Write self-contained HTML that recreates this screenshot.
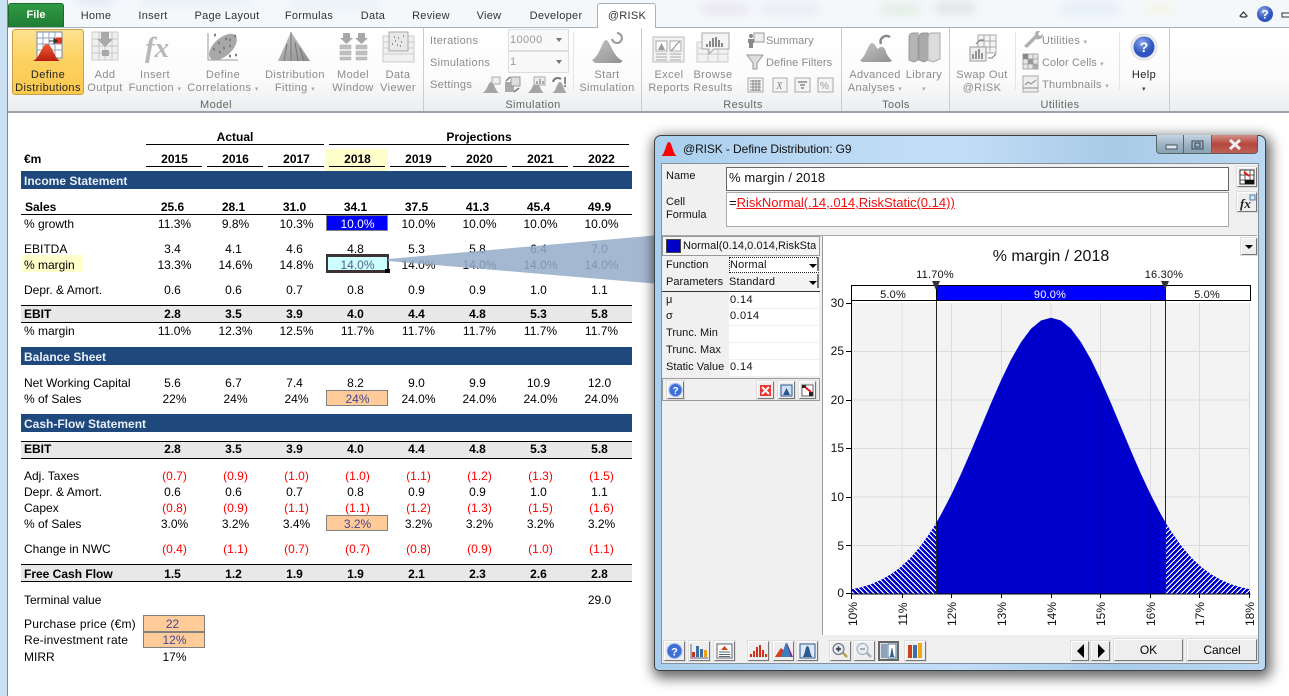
<!DOCTYPE html>
<html><head><meta charset="utf-8">
<style>
html,body{margin:0;padding:0;width:1289px;height:696px;overflow:hidden;background:#fff;font-family:"Liberation Sans",sans-serif;color:#000}
.a{position:absolute}
#top{left:0;top:0;width:1289px;height:27px;background:#f4f8fb;overflow:hidden}
.blob{position:absolute;filter:blur(5px);border-radius:6px;opacity:.4}
#frame{left:0;top:0;width:7px;height:696px;background:#c9dff2;border-right:1px solid #7f8a94}
#rib{left:8px;top:27px;width:1281px;height:83px;background:linear-gradient(#fff 0%,#fbfbfb 60%,#eceef0 100%);border-top:1px solid #a9b0b6;border-bottom:2px solid #9aa3ab}
.sep{position:absolute;top:28px;height:83px;width:1px;background:#c8cdd1}
.sep2{position:absolute;top:32px;height:58px;width:1px;background:#e2e4e6}
.tab{position:absolute;top:10px;font-size:11px;letter-spacing:.3px;line-height:13px;color:#333;transform:translateX(-50%);white-space:nowrap}
.t{position:absolute;font-size:11px;letter-spacing:.4px;line-height:13px;color:#8c8c8c;transform:translateX(-50%);white-space:nowrap;text-align:center}
.g{position:absolute;font-size:11px;letter-spacing:.4px;line-height:13px;color:#666;transform:translateX(-50%);white-space:nowrap}
.s{position:absolute;font-size:11px;letter-spacing:.3px;line-height:13px;color:#8c8c8c;white-space:nowrap}
.combo{position:absolute;left:508px;width:59px;height:20px;border:1px solid #dcdfe2;background:#f9f9f9;font-size:11px;letter-spacing:.4px;line-height:21px;color:#999;text-indent:1px}
.combo:after{content:"";position:absolute;right:6px;top:8px;border:3px solid transparent;border-top:4px solid #777}
.r{position:absolute;left:0;display:flex;height:16px;line-height:16px;font-size:12px;white-space:nowrap}
.r span{width:144px;box-sizing:border-box;padding-left:24px}
.r i{width:61px;text-align:center;font-style:normal}
.n i{padding-right:4px;box-sizing:border-box}
.b{font-weight:bold}
.red i{color:#f00}
.bar{position:absolute;left:21px;width:611px;height:18px;background:#1f497d;color:#e8eef5;font-weight:bold;font-size:12px;line-height:20px;text-indent:3px}
.band{position:absolute;left:21px;width:611px;height:16px;background:#e8e8e8;border-top:1px solid #000;border-bottom:1px solid #000}
.ln{position:absolute;height:1px;background:#000}
.org{position:absolute;background:#ffcc99;border:1px solid #808080;box-sizing:border-box;text-align:center;font-size:12px;color:#454592;line-height:15px}
#dlg{left:654px;top:135px;width:610px;height:534px;border:1px solid #3c4146;border-radius:7px 7px 5px 5px;background:linear-gradient(90deg,#a9cfee,#bcdaf5 30%,#c3ddf6 50%,#a8cbe8 75%,#bcd9f2);box-shadow:2px 4px 13px 3px rgba(0,0,0,.6)}
#in{left:661px;top:163px;width:596px;height:499px;border:1px solid #84919c;background:#f0f0f0}
.d{position:absolute;font-size:11px;letter-spacing:.03px;line-height:14px;color:#111;white-space:nowrap}
.btn{position:absolute;box-sizing:border-box;background:#eee;border:1px solid;border-color:#fff #777 #777 #fff;box-shadow:0 0 0 1px #ddd}
.row{position:absolute;left:729px;width:90px;height:16px;background:#fff}
</style></head><body>

<div id="top" class="a">
<div class="blob" style="left:75px;top:-4px;width:40px;height:8px;background:#b5cee8"></div>
<div class="blob" style="left:140px;top:-3px;width:110px;height:7px;background:#cadbe8"></div>
<div class="blob" style="left:290px;top:0;width:90px;height:7px;background:#c9dde8"></div>
<div class="blob" style="left:700px;top:4px;width:50px;height:10px;background:#d5c6de"></div>
<div class="blob" style="left:760px;top:4px;width:60px;height:10px;background:#d7d7e6"></div>
<div class="blob" style="left:880px;top:4px;width:40px;height:10px;background:#bedcb8"></div>
<div class="blob" style="left:935px;top:3px;width:40px;height:10px;background:#b9bcc2"></div>
<div class="blob" style="left:1060px;top:4px;width:60px;height:10px;background:#c4d8f0"></div>
<div class="blob" style="left:1145px;top:4px;width:30px;height:9px;background:#f2efc2"></div>
</div>
<div id="frame" class="a"></div>
<div id="rib" class="a"></div>

<div class="a" style="left:8px;top:3px;width:56px;height:24px;background:linear-gradient(#2f9a45,#1f7d33);border:1px solid #1d6a2d;border-bottom:none;border-radius:3px 3px 0 0;box-sizing:border-box;color:#fff;font-size:11px;font-weight:bold;text-align:center;line-height:23px">File</div>
<div class="tab" style="left:96px">Home</div>
<div class="tab" style="left:153px">Insert</div>
<div class="tab" style="left:227px">Page Layout</div>
<div class="tab" style="left:309px">Formulas</div>
<div class="tab" style="left:373px">Data</div>
<div class="tab" style="left:431px">Review</div>
<div class="tab" style="left:489px">View</div>
<div class="tab" style="left:556px">Developer</div>
<div class="a" style="left:597px;top:3px;width:59px;height:25px;box-sizing:border-box;background:#fff;border:1px solid #aab1b7;border-bottom:none;border-radius:3px 3px 0 0"></div>
<div class="tab" style="left:627px">@RISK</div>

<div class="a" style="left:12px;top:29px;width:72px;height:66px;box-sizing:border-box;background:linear-gradient(#fde28f,#fcd263 45%,#fbc94e);border:1px solid #c8a04d;border-radius:3px"></div>
<div class="t" style="left:48px;top:69px;color:#222">Define<br>Distributions</div>
<div class="t" style="left:105px;top:69px">Add<br>Output</div>
<div class="t" style="left:155px;top:69px">Insert<br>Function <small style="font-size:7px;color:#aaa">▾</small></div>
<div class="t" style="left:223px;top:69px">Define<br>Correlations <small style="font-size:7px;color:#aaa">▾</small></div>
<div class="t" style="left:295px;top:69px">Distribution<br>Fitting <small style="font-size:7px;color:#aaa">▾</small></div>
<div class="t" style="left:353px;top:69px">Model<br>Window</div>
<div class="t" style="left:398px;top:69px">Data<br>Viewer</div>
<div class="g" style="left:216px;top:99px">Model</div>
<div class="sep" style="left:423px"></div>
<div class="s" style="left:430px;top:35px">Iterations</div>
<div class="s" style="left:430px;top:57px">Simulations</div>
<div class="s" style="left:430px;top:79px">Settings</div>
<div class="combo" style="top:29px">10000</div>
<div class="combo" style="top:51px">1</div>
<div class="sep2" style="left:573px"></div>
<div class="t" style="left:607px;top:69px">Start<br>Simulation</div>
<div class="g" style="left:533px;top:99px">Simulation</div>
<div class="sep" style="left:641px"></div>
<div class="t" style="left:669px;top:69px">Excel<br>Reports</div>
<div class="t" style="left:713px;top:69px">Browse<br>Results</div>
<div class="s" style="left:766px;top:35px;letter-spacing:.1px">Summary</div>
<div class="s" style="left:766px;top:57px;letter-spacing:.1px">Define Filters</div>
<div class="g" style="left:743px;top:99px">Results</div>
<div class="sep" style="left:841px"></div>
<div class="t" style="left:875px;top:69px;letter-spacing:.3px">Advanced<br>Analyses <small style="font-size:7px;color:#aaa">▾</small></div>
<div class="t" style="left:924px;top:69px">Library<br><small style="font-size:7px;color:#aaa">▾</small></div>
<div class="g" style="left:896px;top:99px">Tools</div>
<div class="sep" style="left:949px"></div>
<div class="t" style="left:982px;top:69px">Swap Out<br>@RISK</div>
<div class="sep2" style="left:1015px"></div>
<div class="s" style="left:1042px;top:35px">Utilities <small style="font-size:7px;color:#aaa">▾</small></div>
<div class="s" style="left:1042px;top:57px;letter-spacing:.1px">Color Cells <small style="font-size:7px;color:#aaa">▾</small></div>
<div class="s" style="left:1042px;top:79px">Thumbnails <small style="font-size:7px;color:#aaa">▾</small></div>
<div class="sep2" style="left:1119px"></div>
<div class="t" style="left:1144px;top:69px;color:#222">Help<br><small style="font-size:7px;color:#444">▾</small></div>
<div class="g" style="left:1060px;top:99px">Utilities</div>
<div class="sep" style="left:1169px"></div>

<!-- SHEET -->
<div class="a" style="left:326px;top:149px;width:62px;height:22px;background:#ffffcc"></div>
<div class="a" style="left:21px;top:255px;width:62px;height:17px;background:#ffffcc"></div>
<div class="ln" style="left:146px;top:144px;width:178px"></div>
<div class="ln" style="left:329px;top:144px;width:300px"></div>
<div class="ln" style="left:146px;top:166px;width:56px"></div>
<div class="ln" style="left:207px;top:166px;width:56px"></div>
<div class="ln" style="left:268px;top:166px;width:56px"></div>
<div class="ln" style="left:329px;top:166px;width:56px"></div>
<div class="ln" style="left:390px;top:166px;width:56px"></div>
<div class="ln" style="left:451px;top:166px;width:56px"></div>
<div class="ln" style="left:512px;top:166px;width:56px"></div>
<div class="ln" style="left:573px;top:166px;width:56px"></div>
<div class="ln" style="left:21px;top:214px;width:611px"></div>
<div class="bar" style="top:171px">Income Statement</div>
<div class="bar" style="top:347px">Balance Sheet</div>
<div class="bar" style="top:414px">Cash-Flow Statement</div>
<div class="band" style="top:305px"></div>
<div class="band" style="top:441px"></div>
<div class="band" style="top:564px"></div>
<div class="a" style="left:326px;top:215px;width:62px;height:16px;box-sizing:border-box;background:#0000ff;border:1px solid #808080"></div>
<div class="a" style="left:326px;top:254px;width:63px;height:19px;box-sizing:border-box;background:#ccffff;border:solid #3e3232;border-width:3px 2px"></div>
<div class="a" style="left:385px;top:269px;width:5px;height:4px;background:#000"></div>
<div class="org" style="left:326px;top:390px;width:62px;height:16px"></div>
<div class="org" style="left:326px;top:515px;width:62px;height:16px"></div>
<div class="org" style="left:143px;top:615px;width:62px;height:17px"></div>
<div class="org" style="left:143px;top:632px;width:62px;height:16px"></div>

<div class="a b" style="left:235px;top:129px;font-size:12px;line-height:16px;transform:translateX(-50%)">Actual</div>
<div class="a b" style="left:479px;top:129px;font-size:12px;line-height:16px;transform:translateX(-50%)">Projections</div>
<div class="r b" style="top:151px"><span>€m</span><i>2015</i><i>2016</i><i>2017</i><i>2018</i><i>2019</i><i>2020</i><i>2021</i><i>2022</i></div>
<div class="r b n" style="top:199px"><span style="padding-left:25px">Sales</span><i>25.6</i><i>28.1</i><i>31.0</i><i>34.1</i><i>37.5</i><i>41.3</i><i>45.4</i><i>49.9</i></div>
<div class="r" style="top:216px"><span>% growth</span><i>11.3%</i><i>9.8%</i><i>10.3%</i><i style="color:#fff">10.0%</i><i>10.0%</i><i>10.0%</i><i>10.0%</i><i>10.0%</i></div>
<div class="r n" style="top:241px"><span>EBITDA</span><i>3.4</i><i>4.1</i><i>4.6</i><i>4.8</i><i>5.3</i><i>5.8</i><i>6.4</i><i>7.0</i></div>
<div class="r" style="top:257px"><span>% margin</span><i>13.3%</i><i>14.6%</i><i>14.8%</i><i style="color:#55608a">14.0%</i><i>14.0%</i><i>14.0%</i><i>14.0%</i><i>14.0%</i></div>
<div class="r n" style="top:282px"><span>Depr. &amp; Amort.</span><i>0.6</i><i>0.6</i><i>0.7</i><i>0.8</i><i>0.9</i><i>0.9</i><i>1.0</i><i>1.1</i></div>
<div class="r b n" style="top:306px"><span>EBIT</span><i>2.8</i><i>3.5</i><i>3.9</i><i>4.0</i><i>4.4</i><i>4.8</i><i>5.3</i><i>5.8</i></div>
<div class="r" style="top:323px"><span>% margin</span><i>11.0%</i><i>12.3%</i><i>12.5%</i><i>11.7%</i><i>11.7%</i><i>11.7%</i><i>11.7%</i><i>11.7%</i></div>
<div class="r n" style="top:375px"><span>Net Working Capital</span><i>5.6</i><i>6.7</i><i>7.4</i><i>8.2</i><i>9.0</i><i>9.9</i><i>10.9</i><i>12.0</i></div>
<div class="r" style="top:391px"><span>% of Sales</span><i>22%</i><i>24%</i><i>24%</i><i style="color:#454592">24%</i><i>24.0%</i><i>24.0%</i><i>24.0%</i><i>24.0%</i></div>
<div class="r b n" style="top:441px"><span>EBIT</span><i>2.8</i><i>3.5</i><i>3.9</i><i>4.0</i><i>4.4</i><i>4.8</i><i>5.3</i><i>5.8</i></div>
<div class="r red" style="top:468px"><span>Adj. Taxes</span><i>(0.7)</i><i>(0.9)</i><i>(1.0)</i><i>(1.0)</i><i>(1.1)</i><i>(1.2)</i><i>(1.3)</i><i>(1.5)</i></div>
<div class="r n" style="top:484px"><span>Depr. &amp; Amort.</span><i>0.6</i><i>0.6</i><i>0.7</i><i>0.8</i><i>0.9</i><i>0.9</i><i>1.0</i><i>1.1</i></div>
<div class="r red" style="top:500px"><span>Capex</span><i>(0.8)</i><i>(0.9)</i><i>(1.1)</i><i>(1.1)</i><i>(1.2)</i><i>(1.3)</i><i>(1.5)</i><i>(1.6)</i></div>
<div class="r" style="top:516px"><span>% of Sales</span><i>3.0%</i><i>3.2%</i><i>3.4%</i><i style="color:#454592">3.2%</i><i>3.2%</i><i>3.2%</i><i>3.2%</i><i>3.2%</i></div>
<div class="r red" style="top:541px"><span>Change in NWC</span><i>(0.4)</i><i>(1.1)</i><i>(0.7)</i><i>(0.7)</i><i>(0.8)</i><i>(0.9)</i><i>(1.0)</i><i>(1.1)</i></div>
<div class="r b n" style="top:566px"><span>Free Cash Flow</span><i>1.5</i><i>1.2</i><i>1.9</i><i>1.9</i><i>2.1</i><i>2.3</i><i>2.6</i><i>2.8</i></div>
<div class="r n" style="top:592px"><span>Terminal value</span><i></i><i></i><i></i><i></i><i></i><i></i><i></i><i>29.0</i></div>
<div class="r" style="top:616px"><span style="letter-spacing:.2px">Purchase price (€m)</span><i style="color:#454592;padding-right:4px;box-sizing:border-box">22</i></div>
<div class="r" style="top:632px"><span style="letter-spacing:.15px">Re-investment rate</span><i style="color:#454592">12%</i></div>
<div class="r" style="top:649px"><span>MIRR</span><i>17%</i></div>

<svg class="a" style="left:0;top:0" width="1289" height="696"><polygon points="388,259 660,235 660,284 388,261" fill="rgb(150,172,202)" fill-opacity=".86"/></svg>

<!-- DIALOG -->
<div id="dlg" class="a"></div>
<div class="a" style="left:683px;top:142px;font-size:12px;letter-spacing:-.1px;line-height:15px;color:#111">@RISK - Define Distribution: G9</div>
<div class="a" style="left:1156px;top:135px;width:28px;height:19px;box-sizing:border-box;background:linear-gradient(#c6d6e4,#9fb4c6 50%,#8aa0b4);border:1px solid #566;border-top:none;border-radius:0 0 0 4px"></div>
<div class="a" style="left:1184px;top:135px;width:28px;height:19px;box-sizing:border-box;background:linear-gradient(#c6d6e4,#9fb4c6 50%,#8aa0b4);border:1px solid #566;border-top:none;border-left:none"></div>
<div class="a" style="left:1212px;top:135px;width:46px;height:19px;box-sizing:border-box;background:linear-gradient(#d09088,#b5483e 50%,#bd6258);border:1px solid #655;border-top:none;border-left:none;border-radius:0 0 4px 0"></div>
<div id="in" class="a"></div>

<div class="d" style="left:666px;top:169px">Name</div>
<div class="d" style="left:666px;top:196px;line-height:13px">Cell<br>Formula</div>
<div class="a" style="left:726px;top:167px;width:503px;height:24px;box-sizing:border-box;background:#fff;border:1px solid #666;font-size:13px;letter-spacing:.1px;line-height:20px;padding-left:2px;color:#111">% margin / 2018</div>
<div class="a" style="left:726px;top:192px;width:503px;height:35px;box-sizing:border-box;background:#fff;border:1px solid #aaa;font-size:13px;line-height:18px;padding:1px 0 0 2px;color:#111">=<span style="color:#f01010;text-decoration:underline">RiskNormal(.14,.014,RiskStatic(0.14))</span></div>
<div class="a" style="left:662px;top:235px;width:595px;height:1px;background:#a8a8a8"></div>
<div class="a" style="left:822px;top:236px;width:435px;height:399px;background:#fff;border-left:1px solid #999"></div>

<!-- left panel -->
<div class="a" style="left:662px;top:236px;width:158px;height:20px;box-sizing:border-box;border:1px solid #999;background:#f4f4f4"></div>
<div class="a" style="left:666px;top:239px;width:15px;height:14px;background:#0000c8;border:1px solid #444;box-sizing:border-box"></div>
<div class="a" style="left:683px;top:239px;width:133px;overflow:hidden;font-size:11px;letter-spacing:.05px;line-height:15px;white-space:nowrap;color:#111">Normal(0.14,0.014,RiskStatic(0.14))</div>
<div class="d" style="left:666px;top:258px">Function</div>
<div class="d" style="left:666px;top:275px">Parameters</div>
<div class="a" style="left:729px;top:257px;width:90px;height:16px;box-sizing:border-box;border:1px dotted #222;background:#fff;font-size:11px;line-height:14px;letter-spacing:.2px;color:#111">Normal</div>
<div class="a" style="left:729px;top:274px;width:90px;height:16px;background:#f4f4f4;font-size:11px;line-height:16px;letter-spacing:.2px;color:#111">Standard</div>
<div class="a" style="left:662px;top:291px;width:158px;height:1px;background:#333"></div>
<div class="row" style="top:292px"></div><div class="row" style="top:309px"></div><div class="row" style="top:326px"></div><div class="row" style="top:343px"></div><div class="row" style="top:360px"></div>
<div class="d" style="left:666px;top:293px">μ</div><div class="d" style="left:730px;top:293px;letter-spacing:.4px">0.14</div>
<div class="d" style="left:666px;top:309px">σ</div><div class="d" style="left:730px;top:309px;letter-spacing:.4px">0.014</div>
<div class="d" style="left:666px;top:326px">Trunc. Min</div>
<div class="d" style="left:666px;top:343px">Trunc. Max</div>
<div class="d" style="left:666px;top:360px">Static Value</div><div class="d" style="left:730px;top:360px;letter-spacing:.4px">0.14</div>
<div class="a" style="left:662px;top:378px;width:158px;height:23px;box-sizing:border-box;border:1px solid #999;background:#f0f0f0"></div>
<div class="btn" style="left:667px;top:381px;width:17px;height:18px"></div>
<div class="btn" style="left:757px;top:381px;width:17px;height:18px"></div>
<div class="btn" style="left:778px;top:381px;width:17px;height:18px"></div>
<div class="btn" style="left:799px;top:381px;width:17px;height:18px"></div>

<!-- side buttons -->
<div class="btn" style="left:1237px;top:167px;width:20px;height:20px"></div>
<div class="btn" style="left:1237px;top:192px;width:20px;height:20px"></div>
<div class="btn" style="left:1241px;top:238px;width:16px;height:17px"></div>

<!-- bottom buttons -->
<div class="btn" style="left:664px;top:641px;width:21px;height:20px"></div>
<div class="btn" style="left:689px;top:641px;width:21px;height:20px"></div>
<div class="btn" style="left:714px;top:641px;width:21px;height:20px"></div>
<div class="btn" style="left:748px;top:641px;width:21px;height:20px"></div>
<div class="btn" style="left:773px;top:641px;width:21px;height:20px"></div>
<div class="btn" style="left:797px;top:641px;width:21px;height:20px"></div>
<div class="btn" style="left:830px;top:641px;width:21px;height:20px"></div>
<div class="btn" style="left:854px;top:641px;width:21px;height:20px"></div>
<div class="a" style="left:878px;top:641px;width:21px;height:20px;box-sizing:border-box;background:#dfe3e6;border:2px solid #666"></div>
<div class="btn" style="left:905px;top:641px;width:21px;height:20px"></div>
<div class="btn" style="left:1071px;top:641px;width:18px;height:20px"></div>
<div class="btn" style="left:1091px;top:641px;width:19px;height:20px"></div>
<div class="btn" style="left:1114px;top:639px;width:69px;height:22px;font-size:12px;line-height:20px;text-align:center">OK</div>
<div class="btn" style="left:1187px;top:639px;width:70px;height:22px;font-size:12px;line-height:20px;text-align:center">Cancel</div>

<svg class="a" style="left:0;top:0;font-family:'Liberation Sans',sans-serif" width="1289" height="696">
<defs>
<pattern id="hl" patternUnits="userSpaceOnUse" width="5" height="5"><g shape-rendering="crispEdges"><rect width="5" height="5" fill="#0000cd"/><path d="M0 0h1v1H0ZM1 1h1v1H1ZM2 2h1v1H2ZM3 3h1v1H3ZM4 4h1v1H4Z" fill="#fff"/><path d="M1 0h1v1H1ZM2 1h1v1H2ZM3 2h1v1H3ZM4 3h1v1H4ZM0 4h1v1H0Z" fill="#8888e8"/></g></pattern>
<pattern id="hr" patternUnits="userSpaceOnUse" width="5" height="5"><g shape-rendering="crispEdges"><rect width="5" height="5" fill="#0000cd"/><path d="M4 0h1v1H4ZM3 1h1v1H3ZM2 2h1v1H2ZM1 3h1v1H1ZM0 4h1v1H0Z" fill="#fff"/><path d="M3 0h1v1H3ZM2 1h1v1H2ZM1 2h1v1H1ZM0 3h1v1H0ZM4 4h1v1H4Z" fill="#8888e8"/></g></pattern>
<linearGradient id="rd" x1="0" y1="0" x2="0" y2="1"><stop offset="0" stop-color="#f06030"/><stop offset="1" stop-color="#b81c10"/></linearGradient>
<linearGradient id="gr" x1="0" y1="0" x2="1" y2="1"><stop offset="0" stop-color="#c4c4c4"/><stop offset="1" stop-color="#8f8f8f"/></linearGradient>
<radialGradient id="hb" cx=".4" cy=".3"><stop offset="0" stop-color="#8ba8ea"/><stop offset="1" stop-color="#2f55c0"/></radialGradient>
</defs>

<!-- Define Distributions icon -->
<rect x="37" y="32" width="25" height="26" fill="#fff" stroke="#6f88b0"/>
<path d="M37 38h25M37 44h25M37 50h25M43 32v26M49 32v26M55 32v26" stroke="#8ea3c4" fill="none"/>
<rect x="56" y="37.500" width="6" height="6" fill="#e8301c"/>
<path d="M49 41h5v-2.500l3.500 2.500-3.500 2.500V41.500" fill="#333" stroke="#333"/>
<path d="M33 61C40 58 42 44 47 44S54 58 60 61Z" fill="url(#rd)"/>
<!-- Add Output -->
<rect x="92" y="32" width="26" height="28" fill="#f0f0f0" stroke="#ccc"/>
<path d="M92 39h26M92 46h26M92 53h26M99 32v28M105 32v28M112 32v28" stroke="#c6c6c6" fill="none"/>
<rect x="102" y="50" width="7" height="6" fill="#a8a8a8"/>
<path d="M101 32h8v7h4l-8 8-8-8h4Z" fill="#a9a9a9"/>
<!-- fx -->
<text x="145" y="57" font-family="'Liberation Serif',serif" font-style="italic" font-weight="bold" font-size="29" fill="#b8b8b8">fx</text>
<!-- correlations -->
<path d="M208 33v27h30" stroke="#999" fill="none"/>
<ellipse cx="223" cy="47" rx="17" ry="9" transform="rotate(-42 223 47)" fill="#a8a8a8"/>
<path d="M213 49h2M218 43h2M223 48h2M229 40h2M225 39h2M219 52h2M229 46h2M234 36h2M214 35h2M235 55h2M229 56h2" stroke="#7b7b7b" stroke-width="2.500" fill="none"/>
<!-- fitting -->
<path d="M291 32L278 61H310Z" fill="url(#gr)"/><path d="M291 32v29M287 44l-3 17M295 42l3 19M300 48l4 13" stroke="#777" fill="none"/>
<!-- Model window -->
<path d="M343 33h7v5h3l-6.500 6-6.500-6h3ZM358 33h7v5h3l-6.500 6-6.500-6h3Z" fill="#a8a8a8"/>
<path d="M340 45h11v4h-11ZM356 45h11v4h-11ZM340 51h11v4h-11ZM356 51h11v4h-11ZM340 57h11v3h-11ZM356 57h11v3h-11Z" fill="#c0c0c0" stroke="#aaa" stroke-width=".5"/>
<!-- Data viewer -->
<rect x="383" y="36" width="31" height="26" fill="#f0f0f0" stroke="#ccc"/><path d="M383 42h31M383 48h31M383 54h31" stroke="#ccc"/>
<rect x="389" y="32" width="19" height="19" fill="#e8e8e8" stroke="#aaa"/>
<path d="M392 44h1M395 41h1M398 38h1M401 42h1M394 37h1M403 36h1M397 45h1M400 46h1" stroke="#777" stroke-width="1.500"/>
<!-- Settings icons -->
<path d="M482 93c5-1 6-11 9-11s5 10 8 11Z" fill="#a5a5a5"/><rect x="492" y="77" width="8" height="7" fill="#eee" stroke="#aaa"/>
<rect x="505" y="82" width="9" height="10" fill="#aaa"/><rect x="511" y="77" width="9" height="9" fill="#ddd" stroke="#999"/><path d="M506 81l4-4M514 92l5-4" stroke="#777" stroke-width="1.500"/>
<path d="M527 93c5-1 6-11 9-11s5 10 8 11Z" fill="#a5a5a5"/><rect x="534" y="77" width="11" height="8" fill="#eee" stroke="#aaa"/><path d="M537 84v-3M540 84v-5M543 84v-3" stroke="#666"/>
<path d="M552 93c4-1 5-11 8-11s4 10 7 11Z" fill="#a5a5a5"/><path d="M553 82c1-4 5-5 8-3" stroke="#777" stroke-width="2" fill="none"/><path d="M565 77v7M565 85v2" stroke="#666" stroke-width="1.500"/>
<!-- Start simulation -->
<path d="M592 60C600 56 602 40 606 40C610 40 612 56 623 61L620 63H595Z" fill="url(#gr)"/>
<path d="M612 39a5 5 0 1 0 5-6" stroke="#999" stroke-width="2" fill="none"/>
<!-- Excel Reports -->
<rect x="653" y="37" width="31" height="25" fill="#f2f2f2" stroke="#bbb"/><rect x="656" y="41" width="11" height="10" fill="#fff" stroke="#aaa"/><rect x="670" y="41" width="11" height="10" fill="#fff" stroke="#aaa"/>
<path d="M658 50l3.500-7 3.500 7Z" fill="#999"/><path d="M671 50c4 0 4-7 9-8" stroke="#888" fill="none"/><path d="M656 54h11M670 54h11M656 57h11M670 57h11M656 60h11M670 60h11" stroke="#aaa"/>
<!-- Browse Results -->
<rect x="697" y="42" width="31" height="20" fill="#f2f2f2" stroke="#ccc"/><path d="M697 48h31M697 54h31M708 42v20M718 42v20" stroke="#ccc"/>
<path d="M702 33h27v16h-15l-5 5v-5h-7Z" fill="#f4f4f4" stroke="#aaa"/>
<path d="M707 47v-3M710 47v-6M713 47v-9M716 47v-10M719 47v-7M722 47v-4" stroke="#888" stroke-width="2"/>
<!-- Summary, filters, etc -->
<rect x="754" y="33" width="10" height="9" fill="#eee" stroke="#999"/><circle cx="751" cy="36" r="2" fill="#888"/><path d="M748 39h6v4h-1v5h-4v-5h-1Z" fill="#888"/>
<path d="M747 55h16l-6 8v6h-4v-6Z" fill="#ddd" stroke="#999"/>
<g fill="#f4f4f4" stroke="#aaa"><rect x="748" y="78" width="15" height="14"/><rect x="773" y="78" width="14" height="14"/><rect x="795" y="78" width="15" height="14"/><rect x="818" y="78" width="15" height="14"/></g>
<path d="M750 81h11M750 84h11M750 87h11M750 90h11M753 80v11M756 80v11M759 80v11" stroke="#888"/>
<text x="776" y="89" font-family="'Liberation Serif',serif" font-style="italic" font-size="11" fill="#888">X</text>
<path d="M798 82h9M800 85h5M801 88h3" stroke="#888" stroke-width="1.500"/>
<text x="820" y="89" font-size="10" fill="#999">%</text>
<!-- Advanced analyses -->
<path d="M860 60C866 57 868 43 872 43C875 43 876 48 878 49C881 45 885 47 886 52C887 56 890 58 892 61L889 62H862Z" fill="url(#gr)"/><path d="M881 44c-2-6 4-10 9-7" stroke="#888" stroke-width="2.500" fill="none"/>
<!-- Library -->
<path d="M909 38q0-5 4-5h5v27l-4 2-5-2Z" fill="#b5b5b5" stroke="#999"/><path d="M919 38q0-5 4-5h5v27l-4 2-5-2Z" fill="#aaa" stroke="#999"/><path d="M928 38q0-5 4-5h8v26l-7 3-5-2Z" fill="#dcdcdc" stroke="#aaa"/>
<!-- Swap out -->
<rect x="978" y="35" width="18" height="18" fill="#f4f4f4" stroke="#aaa"/><path d="M978 41h18M978 47h18M984 35v18M990 35v18" stroke="#aaa"/>
<rect x="970" y="47" width="16" height="14" fill="#eee" stroke="#999"/><path d="M973 59v-5M976 59v-8M979 59v-10M982 59v-6" stroke="#777" stroke-width="1.500"/>
<path d="M976 44l4-4h4M996 54l-4 4h-4" stroke="#777" fill="none"/>
<!-- Utilities -->
<path d="M1024 46l11-11a4 4 0 0 1 2-4l3 0-2 3 2 2 3-2a5 5 0 0 1-7 5l-9 9Z" fill="#b0b0b0"/>
<rect x="1023" y="54" width="15" height="15" fill="#e6e6e6" stroke="#aaa"/><path d="M1023 59h15M1023 64h15M1028 54v15M1033 54v15" stroke="#aaa"/><rect x="1023" y="54" width="5" height="5" fill="#888"/><rect x="1028" y="59" width="5" height="5" fill="#999"/><rect x="1033" y="64" width="5" height="5" fill="#aaa"/>
<rect x="1023" y="76" width="15" height="16" fill="#eee" stroke="#aaa"/><path d="M1025 85l3-3 3 2 5-4M1023 88h15" stroke="#888" fill="none"/>
<!-- Help -->
<circle cx="1144" cy="47" r="13" fill="#ececec" stroke="#ddd"/><circle cx="1144" cy="47" r="10.500" fill="url(#hb)"/>
<text x="1144" y="52" font-size="14" font-weight="bold" fill="#fff" text-anchor="middle">?</text>
<!-- top right -->
<path d="M1240 16l3.500-4 3.500 4-1.500 1h-4Z" fill="none" stroke="#333" stroke-width="1.200"/>
<circle cx="1265" cy="14" r="8" fill="url(#hb)"/><text x="1265" y="18.500" font-size="12" font-weight="bold" fill="#fff" text-anchor="middle">?</text>
<rect x="1282" y="13" width="8" height="4" fill="none" stroke="#333"/>

<!-- dialog title icon -->
<path d="M661 156C665 155 666 142 669 142S673 155 677 156Z" fill="#f00"/>
<rect x="1166" y="145" width="11" height="4" fill="#dde6ee" stroke="#4a5560"/>
<rect x="1192" y="141" width="11" height="8" fill="none" stroke="#39444e"/><rect x="1195" y="143" width="5" height="4" fill="none" stroke="#39444e"/>
<path d="M1230 140l10 9M1240 140l-10 9" stroke="#eee" stroke-width="3"/>

<!-- chart -->
<rect x="851" y="303" width="399" height="291" fill="#f3f3f3"/>
<path d="M902 303v291M951.500 303v291M1001.500 303v291M1051 303v291M1100.500 303v291M1150.500 303v291M1199.500 303v291M1249.500 303v291M851 351.500h399M851 400h399M851 448.500h399M851 497h399M851 545.500h399" stroke="#dcdcdc" fill="none"/>
<polygon points="851,594 852,589.300 861,587.300 871,584.200 881,579.900 891,574.200 901,566.700 911,557.200 921,545.500 931,531.200 936,523.200 936,594" fill="url(#hl)"/>
<polygon points="936,594 936,523.200 941,514.500 951,495.300 961,474 971,451 981,427.100 991,403.200 1001,380.400 1011,359.600 1021,342.200 1031,328.800 1041,320.500 1051,317.700 1061,320.500 1071,328.800 1081,342.200 1091,359.600 1101,380.400 1111,403.200 1121,427.100 1131,451 1141,474 1151,495.300 1161,514.500 1166,523.200 1166,594" fill="#0000cd"/>
<polygon points="1166,594 1166,523.200 1171,531.200 1181,545.500 1191,557.200 1201,566.700 1211,574.200 1221,579.900 1231,584.200 1241,587.300 1250,589.300 1250,594" fill="url(#hr)"/>
<path d="M1001.500 380v214M1051 318v276M1100.500 380v214M1150.500 495v99M951.500 495v99" stroke="#0000b8" fill="none"/>
<path d="M851.500 300v294h399" stroke="#000" fill="none"/>
<path d="M846 303.500h5M846 351.500h5M846 400.500h5M846 448.500h5M846 497.500h5M846 545.500h5M846 593.500h5M851.500 594v5M902.500 594v4M951.500 594v4M1001.500 594v4M1051.500 594v4M1100.500 594v4M1150.500 594v4M1199.500 594v4M1249.500 594v4" stroke="#000" fill="none"/>
<path d="M936.500 295v299M1165.500 295v299" stroke="#222" fill="none"/>
<rect x="851.500" y="285.500" width="399" height="15" fill="#fff" stroke="#000"/>
<rect x="936.500" y="285.500" width="229" height="15" fill="#0000ff" stroke="#000"/>
<path d="M932 281h8l-4 9ZM1161 281h8l-4 9Z" fill="#333"/>
<g font-size="11" text-anchor="middle" fill="#111" style="letter-spacing:.2px">
<text x="893" y="298">5.0%</text><text x="1050" y="298" fill="#fff">90.0%</text><text x="1207" y="298">5.0%</text>
<text x="935" y="278">11.70%</text><text x="1164" y="278">16.30%</text>
</g>
<text x="1051" y="261" font-size="16" text-anchor="middle" fill="#111">% margin / 2018</text>
<g font-size="12" text-anchor="end" fill="#111">
<text x="844" y="307">30</text><text x="844" y="355">25</text><text x="844" y="404">20</text><text x="844" y="452">15</text><text x="844" y="501">10</text><text x="844" y="550">5</text><text x="844" y="597">0</text>
</g>
<g font-size="12" text-anchor="middle" fill="#111">
<text transform="translate(857,614) rotate(-90)">10%</text>
<text transform="translate(907,614) rotate(-90)">11%</text>
<text transform="translate(956,614) rotate(-90)">12%</text>
<text transform="translate(1006,614) rotate(-90)">13%</text>
<text transform="translate(1056,614) rotate(-90)">14%</text>
<text transform="translate(1105,614) rotate(-90)">15%</text>
<text transform="translate(1155,614) rotate(-90)">16%</text>
<text transform="translate(1204,614) rotate(-90)">17%</text>
<text transform="translate(1254,614) rotate(-90)">18%</text>
</g>

<!-- dropdown arrows -->
<path d="M809 264h8l-4 4ZM809 281h8l-4 4ZM1245 245h8l-4 4Z" fill="#000"/>
<rect x="817" y="257" width="2" height="14" fill="#777"/><rect x="817" y="274" width="2" height="14" fill="#777"/>
<!-- panel buttons -->
<circle cx="675.500" cy="390" r="6.500" fill="#3d6fd6" stroke="#9cb8ee"/><text x="675.500" y="394" font-size="10" font-weight="bold" fill="#fff" text-anchor="middle">?</text>
<rect x="760" y="385" width="11" height="11" fill="#e33"/><path d="M762 387l7 7M769 387l-7 7" stroke="#fff" stroke-width="2"/>
<rect x="781" y="385" width="11" height="11" fill="#cfe0f4" stroke="#27588f"/><path d="M783 395l3.500-7 3.500 7Z" fill="#27588f"/>
<rect x="802" y="385" width="11" height="11" fill="#fff" stroke="#666"/><rect x="802" y="385" width="4" height="3" fill="#222"/><rect x="809" y="392" width="4" height="4" fill="#222"/><path d="M805 387l6 5" stroke="#e11" stroke-width="2"/>
<!-- side buttons icons -->
<rect x="1240" y="170" width="14" height="14" fill="#fff" stroke="#333"/><path d="M1240 175h14M1240 180h14M1245 170v14M1250 170v14" stroke="#555"/><rect x="1245" y="180" width="9" height="4" fill="#111"/><path d="M1244 172l5 4" stroke="#e11" stroke-width="2"/>
<text x="1240" y="208" font-family="'Liberation Serif',serif" font-style="italic" font-weight="bold" font-size="13" fill="#222">fx</text>
<rect x="1250" y="195" width="5" height="5" fill="#d8e6f6" stroke="#4a78b0"/>
<!-- bottom toolbar icons -->
<circle cx="674.500" cy="651" r="7.500" fill="#3d6fd6" stroke="#a5bfee"/><text x="674.500" y="655.500" font-size="11" font-weight="bold" fill="#fff" text-anchor="middle">?</text>
<path d="M692 657v-5h3v5ZM696 657v-11h3v11ZM700 657v-8h3v8ZM704 657v-5h3v5Z" fill="#3c6fa6"/><rect x="692" y="652" width="3" height="5" fill="#c8321c"/><rect x="704" y="650" width="3" height="7" fill="#f0a010"/><path d="M691 644v14h17" stroke="#667" fill="none"/>
<rect x="717" y="644" width="15" height="14" fill="#fff" stroke="#667"/><path d="M721 650l3.500-4 3.500 4Z" fill="#d8401c"/><path d="M719 652h11M719 654.500h11M719 656.500h11" stroke="#567"/>
<path d="M751 657v-3M754 657v-6M757 657v-10M760 657v-12M763 657v-7M766 657v-3" stroke="#d0301c" stroke-width="2"/>
<path d="M775 657l6-9 3 3 3-8 6 14Z" fill="#8a1a88"/><path d="M775 657l6-9 4 9Z" fill="#d8401c"/><path d="M781 657l5-15 5 15Z" fill="#3c80c0"/>
<rect x="800" y="644" width="15" height="14" fill="#dce8f4" stroke="#35588a"/><path d="M802 657c3 0 3-11 5.500-11S810 657 813 657Z" fill="#285a90"/>
<circle cx="838.500" cy="649" r="5.500" fill="#dbe6f2" stroke="#667"/><path d="M836 649h5M838.500 646.500v5" stroke="#333" stroke-width="1.500"/><path d="M843 653l4 4" stroke="#b8a050" stroke-width="2.500"/>
<circle cx="862.500" cy="649" r="5.500" fill="#e8eef5" stroke="#9aaabb"/><path d="M860 649h5" stroke="#8898aa" stroke-width="1.500"/><path d="M867 653l4 4" stroke="#aab" stroke-width="2.500"/>
<rect x="881" y="644" width="6" height="14" fill="#8ea3bb"/><rect x="888" y="644" width="8" height="14" fill="#fff" stroke="#5a7a9a"/><path d="M889 657c2 0 2-9 3-9s1 9 3 9Z" fill="#2f5f90"/>
<rect x="908" y="645" width="4" height="13" fill="#c8401c"/><rect x="913" y="645" width="4" height="13" fill="#3a6ea8"/><rect x="918" y="643" width="4" height="15" fill="#f0a818"/>
<!-- nav -->
<path d="M1084 644v14l-7-7ZM1098 644v14l7-7Z" fill="#000"/>
</svg>
</body></html>
